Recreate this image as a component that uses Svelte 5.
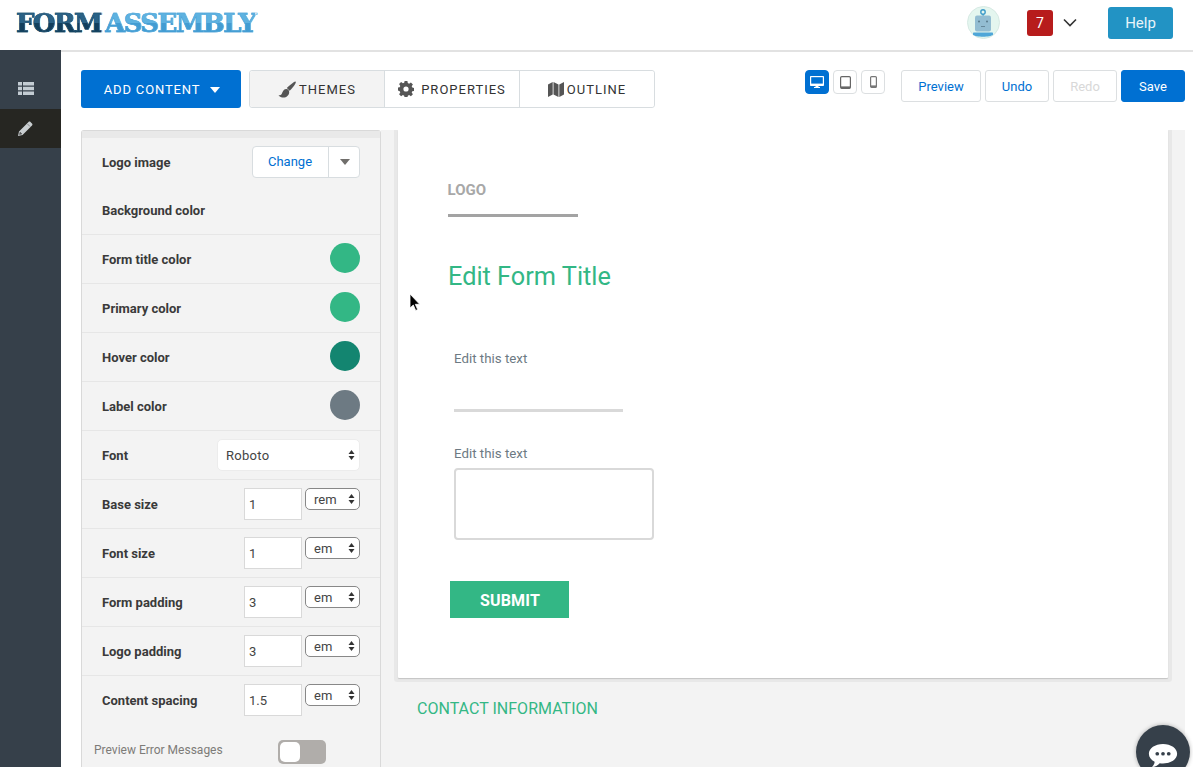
<script lang="ts">
  const colorRows = [
    { label: 'Form title color', color: '#33b785' },
    { label: 'Primary color', color: '#33b785' },
    { label: 'Hover color', color: '#138570' },
    { label: 'Label color', color: '#6d7a83' }
  ];
  const sizeRows = [
    { label: 'Base size', value: '1', unit: 'rem' },
    { label: 'Font size', value: '1', unit: 'em' },
    { label: 'Form padding', value: '3', unit: 'em' },
    { label: 'Logo padding', value: '3', unit: 'em' },
    { label: 'Content spacing', value: '1.5', unit: 'em' }
  ];
</script>

{#snippet updown()}
  <svg class="updown" width="7" height="12" viewBox="0 0 7 12" aria-hidden="true">
    <path d="M3.5 1L6.5 5H.5zM3.5 11L.5 7h6z" fill="#333" />
  </svg>
{/snippet}

<div class="page">
  <header class="topbar">
    <div class="logo"><span class="form">FORM</span><span class="assembly">ASSEMBLY</span></div>
    <div class="top-right">
      <svg class="avatar" width="33" height="33" viewBox="0 0 33 33" aria-hidden="true">
        <circle cx="16.500" cy="16.500" r="16" fill="#e4f6ef" stroke="#d6e9e3" />
        <circle cx="16" cy="6" r="2.200" fill="none" stroke="#3d9bc9" stroke-width="1.400" />
        <rect x="15.500" y="8" width="1.200" height="2" fill="#3d9bc9" />
        <rect x="8" y="9.500" width="16" height="16" rx="2" fill="#93bdd2" />
        <circle cx="12" cy="15.500" r="1" fill="#5a7a8b" />
        <circle cx="20" cy="15.500" r="1" fill="#5a7a8b" />
        <path d="M14 20.500h4" stroke="#5a7a8b" stroke-width=".8" />
        <path d="M7 26.500h18c.6 0 1 .4 1 1v1.300c-2.500 2.600-17.500 2.600-20 0v-1.300c0-.6.400-1 1-1z" fill="#4ea6d8" />
      </svg>
      <div class="badge">7</div>
      <svg class="chev" width="14" height="9" viewBox="0 0 14 9" aria-hidden="true">
        <path d="M1 1.500l6 6 6-6" fill="none" stroke="#333" stroke-width="1.600" />
      </svg>
      <button class="help">Help</button>
    </div>
  </header>

  <div class="body">
    <nav class="rail">
      <div class="rail-item">
        <svg width="16" height="13" viewBox="0 0 16 13" aria-hidden="true">
          <path d="M0 0h4v3.500H0zM5 0h11v3.500H5zM0 4.700h4v3.600H0zM5 4.700h11v3.600H5zM0 9.500h4V13H0zM5 9.500h11V13H5z" fill="#c3ccd3" />
        </svg>
      </div>
      <div class="rail-item active">
        <svg width="15" height="15" viewBox="0 0 15 15" aria-hidden="true">
          <path d="M0 15l1-4.500L10.500 1c.6-.6 1.400-.6 2 0l1.500 1.500c.6.600.6 1.400 0 2L4.500 14z" fill="#c9ced1" />
          <path d="M1.500 13.500l.6-2.400 1.800 1.800zM9.500 3l2.500 2.500" fill="#555" stroke="#555" stroke-width=".6" />
        </svg>
      </div>
    </nav>

    <main class="main">
      <div class="toolbar">
        <button class="add">ADD CONTENT <span class="caret"></span></button>
        <div class="tabs">
          <button class="tab themes">
            <svg width="18" height="17" viewBox="0 0 18 17" aria-hidden="true">
              <path d="M17.500 .5c.5.5.4 1.200-.2 2.200-1.500 2.500-3.700 5.200-5.600 7l-2.900-2.700C10.700 5 13.500 2.800 16 1c.6-.4 1.100-.8 1.500-.5zM8 8c2-.2 3.300 1.200 3.200 3.200-.2 3.200-2.700 5.300-5.700 5.300-2 0-4-.8-5-2.300 1.300.2 2.700-.3 3.300-1.500C4.600 10.800 5.500 8.300 8 8z" fill="#555" />
            </svg>
            THEMES
          </button>
          <button class="tab props">
            <svg width="16" height="16" viewBox="0 0 16 16" aria-hidden="true">
              <path fill-rule="evenodd" d="M6.600 0h2.800l.4 2.100 1.300.6 1.800-1.200 2 2-1.200 1.800.6 1.300 2.100.4v2.800l-2.100.4-.6 1.300 1.200 1.800-2 2-1.800-1.200-1.300.6-.4 2.100H6.600l-.4-2.100-1.300-.6-1.800 1.200-2-2 1.200-1.800-.6-1.300L-.4 9.400V6.600l2.100-.4.600-1.300L1.100 3.100l2-2 1.800 1.200 1.300-.6zM8 5.400a2.600 2.600 0 1 0 0 5.200 2.600 2.600 0 0 0 0-5.200z" fill="#555" />
            </svg>
            PROPERTIES
          </button>
          <button class="tab outline">
            <svg width="16" height="15" viewBox="0 0 16 15" aria-hidden="true">
              <path d="M0 2.500L4.700 0v12.500L0 15zM5.500 0l5 2.500V15l-5-2.500zM11.300 2.500L16 0v12.500L11.300 15z" fill="#555" />
            </svg>
            OUTLINE
          </button>
        </div>
        <div class="tools">
          <div class="devices">
            <button class="device on" aria-label="Desktop">
              <svg width="14" height="12" viewBox="0 0 14 12" aria-hidden="true">
                <path d="M0 1c0-.6.4-1 1-1h12c.6 0 1 .4 1 1v8c0 .6-.4 1-1 1H8.500v1H10v1H4v-1h1.500v-1H1c-.6 0-1-.4-1-1z" fill="#fff" />
                <rect x="1.200" y="1.200" width="11.600" height="6.400" fill="#0070d2" />
              </svg>
            </button>
            <button class="device" aria-label="Tablet">
              <svg width="11" height="13" viewBox="0 0 11 13" aria-hidden="true">
                <rect x=".6" y=".6" width="9.800" height="11.800" rx="1.200" fill="none" stroke="#666" stroke-width="1.200" />
                <rect x="1" y="10.400" width="9" height="2" fill="#666" />
              </svg>
            </button>
            <button class="device" aria-label="Phone">
              <svg width="7" height="12" viewBox="0 0 7 12" aria-hidden="true">
                <rect x=".6" y=".6" width="5.800" height="10.800" rx="1" fill="none" stroke="#777" stroke-width="1.200" />
                <rect x="1" y="9.400" width="5" height="2" fill="#777" />
              </svg>
            </button>
          </div>
          <button class="act preview">Preview</button>
          <button class="act undo">Undo</button>
          <button class="act redo" disabled>Redo</button>
          <button class="act save">Save</button>
        </div>
      </div>

      <div class="workspace">
        <aside class="panel">
          <div class="row first">
            <span class="lbl">Logo image</span>
            <div class="change">
              <span class="change-main">Change</span>
              <span class="change-drop"><span class="drop-caret"></span></span>
            </div>
          </div>
          <div class="row second"><span class="lbl">Background color</span></div>
          {#each colorRows as row}
            <div class="row">
              <span class="lbl">{row.label}</span>
              <span class="swatch" style:background={row.color}></span>
            </div>
          {/each}
          <div class="row">
            <span class="lbl">Font</span>
            <div class="font-select">Roboto {@render updown()}</div>
          </div>
          {#each sizeRows as row}
            <div class="row">
              <span class="lbl">{row.label}</span>
              <div class="size">
                <span class="num">{row.value}</span>
                <span class="unit">{row.unit} {@render updown()}</span>
              </div>
            </div>
          {/each}
          <div class="error-row">
            <span class="error-text">Preview Error Messages</span>
            <span class="toggle"><span class="knob"></span></span>
          </div>
        </aside>

        <section class="canvas">
          <div class="card">
            <div class="logo-slot">LOGO</div>
            <h1>Edit Form Title</h1>
            <div class="field">
              <div class="flabel">Edit this text</div>
              <div class="line"></div>
            </div>
            <div class="field second-field">
              <div class="flabel">Edit this text</div>
              <div class="area"></div>
            </div>
            <button class="submit">SUBMIT</button>
          </div>
          <div class="contact">CONTACT INFORMATION</div>
        </section>
      </div>
    </main>
  </div>

  <svg class="cursor" width="12" height="19" viewBox="0 0 12 19" aria-hidden="true">
    <path d="M1 1v14l3.300-3 2.400 5.500 2-.9-2.400-5.300h4.400z" fill="#000" stroke="#fff" stroke-width=".8" />
  </svg>

  <div class="chat">
    <svg width="30" height="25" viewBox="0 0 34 28" aria-hidden="true">
      <path d="M17 1c9 0 16 4.800 16 11s-7 11-16 11c-1.300 0-2.500-.1-3.700-.3C11 25 8 27 4.500 27c1.500-1.500 3-3.800 3-6C3.500 19 1 15.800 1 12 1 5.800 8 1 17 1z" fill="#fff" />
      <circle cx="10.500" cy="12" r="2.100" fill="#36404a" />
      <circle cx="17" cy="12" r="2.100" fill="#36404a" />
      <circle cx="23.500" cy="12" r="2.100" fill="#36404a" />
    </svg>
  </div>
</div>

<style>
  :global(body) {
    margin: 0;
    background: #fff;
    font-family: Roboto, 'Liberation Sans', sans-serif;
  }
  button {
    font-family: inherit;
    cursor: pointer;
  }
  .page {
    position: relative;
    width: 1193px;
    height: 767px;
    overflow: hidden;
  }

  /* top bar */
  .topbar {
    height: 50px;
    box-sizing: border-box;
    display: flex;
    align-items: center;
    justify-content: space-between;
    padding: 0 20px 0 15px;
    background: #fff;
  }
  .logo {
    font-family: 'DejaVu Serif', serif;
    font-weight: 700;
    font-size: 26px;
    line-height: 30px;
    letter-spacing: -1.6px;
    margin-top: -5px;
    margin-left: 1px;
  }
  .form {
    background: linear-gradient(#2a6286 50%, #123f5c 50%);
    -webkit-background-clip: text;
    background-clip: text;
    color: transparent;
    -webkit-text-stroke: 0.6px #1c4f70;
  }
  .assembly {
    margin-left: 4px;
    background: linear-gradient(#5eb2e0 50%, #429cd2 50%);
    -webkit-background-clip: text;
    background-clip: text;
    color: transparent;
    -webkit-text-stroke: 0.6px #4ea6da;
  }
  .top-right {
    display: flex;
    align-items: center;
    margin-top: -5px;
  }
  .avatar {
    margin-right: 27px;
  }
  .badge {
    width: 26px;
    height: 26px;
    border-radius: 3px;
    background: #b71c1c;
    color: #fff;
    font-size: 14px;
    line-height: 26px;
    text-align: center;
  }
  .chev {
    margin: 0 31px 0 10px;
  }
  .help {
    width: 65px;
    height: 32px;
    border: 0;
    border-radius: 3px;
    background: #2293c4;
    color: #e8f4fa;
    font-size: 15px;
  }

  /* shell */
  .body {
    display: flex;
    height: 717px;
  }
  .rail {
    width: 61px;
    flex: none;
    background: #36404a;
    padding-top: 18px;
    box-sizing: border-box;
  }
  .rail-item {
    height: 41px;
    display: flex;
    align-items: center;
    justify-content: center;
    padding-right: 10px;
  }
  .rail-item.active {
    background: #262622;
    height: 39px;
  }
  .main {
    flex: 1;
    min-width: 0;
    border-top: 2px solid #e2e2e2;
  }

  /* toolbar */
  .toolbar {
    height: 78px;
    box-sizing: border-box;
    display: flex;
    align-items: flex-start;
    padding: 18px 8px 0 20px;
  }
  .add {
    width: 160px;
    height: 38px;
    border: 0;
    border-radius: 3px;
    background: #0070d2;
    color: #fff;
    font-size: 13px;
    letter-spacing: 0.85px;
    padding: 0 0 0 2px;
    display: flex;
    align-items: center;
    justify-content: center;
    gap: 10px;
  }
  .caret {
    width: 0;
    height: 0;
    border: 5px solid transparent;
    border-top: 6px solid #fff;
    border-bottom: 0;
    margin-top: 2px;
  }
  .tabs {
    display: flex;
    margin-left: 8px;
    height: 38px;
    box-sizing: border-box;
    border: 1px solid #d8dde0;
    border-radius: 3px;
  }
  .tab {
    border: 0;
    border-right: 1px solid #d8dde0;
    background: #fff;
    color: #333;
    font-size: 13px;
    letter-spacing: 1px;
    display: flex;
    align-items: center;
    justify-content: center;
    padding: 0;
  }
  .tab svg {
    flex: none;
  }
  .tab:last-child {
    border-right: 0;
    border-radius: 0 3px 3px 0;
  }
  .themes {
    width: 135px;
    background: #f3f3f3;
    gap: 3px;
    border-radius: 3px 0 0 3px;
  }
  .props {
    width: 135px;
    gap: 7px;
  }
  .outline {
    width: 134px;
    gap: 3px;
  }
  .tools {
    margin-left: auto;
    display: flex;
    align-items: flex-start;
  }
  .devices {
    display: flex;
    gap: 4px;
    margin-right: 16px;
  }
  .device {
    width: 24px;
    height: 24px;
    box-sizing: border-box;
    border: 1px solid #dcdfe1;
    border-radius: 4px;
    background: #fff;
    padding: 0;
    display: flex;
    align-items: center;
    justify-content: center;
  }
  .device.on {
    background: #0070d2;
    border-color: #0070d2;
  }
  .act {
    height: 32px;
    box-sizing: border-box;
    border: 1px solid #dcdfe1;
    border-radius: 3px;
    background: #fff;
    color: #0070d2;
    font-size: 13px;
    padding: 0;
    margin-right: 4px;
  }
  .preview {
    width: 80px;
  }
  .undo {
    width: 64px;
  }
  .redo {
    width: 64px;
    color: #d8d8d8;
    cursor: default;
  }
  .save {
    width: 64px;
    margin-right: 0;
    background: #0070d2;
    border-color: #0070d2;
    color: #fff;
  }

  /* workspace */
  .workspace {
    display: flex;
    align-items: flex-start;
    padding-left: 20px;
  }
  .panel {
    width: 300px;
    height: 637px;
    flex: none;
    box-sizing: border-box;
    background: #f3f3f3;
    border: 1px solid #d9d9d9;
    border-bottom: 0;
    border-radius: 3px 3px 0 0;
  }
  .row {
    height: 49px;
    box-sizing: border-box;
    display: flex;
    align-items: center;
    justify-content: space-between;
    padding: 0 20px;
    border-bottom: 1px solid #e6e6e6;
  }
  .row.first {
    height: 56px;
    border-bottom: 0;
    border-top: 7px solid #e9e9e9;
  }
  .row.second {
    height: 48px;
  }
  .row:nth-last-child(2) {
    border-bottom-color: transparent;
  }
  .lbl {
    font-size: 13px;
    font-weight: 700;
    color: #3a3a3a;
  }
  .change {
    display: flex;
    height: 32px;
    box-sizing: border-box;
    border: 1px solid #d8dde0;
    border-radius: 4px;
    background: #fff;
    margin-top: -2px;
  }
  .change-main {
    width: 74px;
    padding-right: 1px;
    text-align: center;
    font-size: 13px;
    line-height: 30px;
    color: #0070d2;
    border-right: 1px solid #d8dde0;
  }
  .change-drop {
    width: 30px;
    padding-left: 1px;
    box-sizing: border-box;
    display: flex;
    align-items: center;
    justify-content: center;
  }
  .drop-caret {
    width: 0;
    height: 0;
    border: 5px solid transparent;
    border-top: 6px solid #706e6b;
    border-bottom: 0;
  }
  .swatch {
    width: 30px;
    height: 30px;
    border-radius: 50%;
    margin-top: -2px;
  }
  .font-select {
    width: 143px;
    height: 32px;
    box-sizing: border-box;
    background: #fff;
    border-radius: 5px;
    border: 1px solid #ececec;
    padding: 0 4px 0 8px;
    font-size: 13px;
    color: #444;
    letter-spacing: 0.3px;
    display: flex;
    align-items: center;
    justify-content: space-between;
  }
  .size {
    display: flex;
    align-items: flex-start;
    gap: 3px;
  }
  .num {
    width: 58px;
    height: 32px;
    box-sizing: border-box;
    background: #fff;
    border: 1px solid #d9d9d9;
    padding-left: 4px;
    font-size: 13px;
    line-height: 32px;
    color: #444;
  }
  .unit {
    width: 55px;
    height: 22px;
    box-sizing: border-box;
    background: #fff;
    border: 1px solid #888;
    border-radius: 5px;
    padding: 0 4px 0 8px;
    font-size: 13px;
    color: #444;
    display: flex;
    align-items: center;
    justify-content: space-between;
  }
  .error-row {
    display: flex;
    align-items: center;
    padding: 0 0 0 12px;
    height: 24px;
    margin-top: 15px;
    font-size: 12px;
    color: #7d7b78;
  }
  .error-text {
    margin-bottom: 4px;
  }
  .toggle {
    position: relative;
    width: 48px;
    height: 24px;
    margin-left: 55px;
    border-radius: 5px;
    background: #b0adaa;
  }
  .knob {
    position: absolute;
    left: 2px;
    top: 2px;
    width: 20px;
    height: 20px;
    border-radius: 5px;
    background: #fff;
  }

  /* form canvas */
  .canvas {
    width: 804px;
    height: 637px;
    flex: none;
    background: #f3f3f3;
    padding-left: 17px;
    box-sizing: border-box;
    overflow: hidden;
  }
  .card {
    width: 770px;
    height: 548px;
    box-sizing: border-box;
    background: #fff;
    border-radius: 0 0 1px 1px;
    box-shadow:
      0 1px 1px #c4c4c4,
      0 0 0 4px #e8e8e8;
    padding: 50px 0 0 50px;
  }
  .logo-slot {
    width: 130px;
    height: 37px;
    box-sizing: border-box;
    border-bottom: 3px solid #a3a3a3;
    color: #a8a8a8;
    font-size: 15px;
    font-weight: 700;
    line-height: 20px;
    margin-left: -0.5px;
  }
  h1 {
    margin: 45px 0 0 0;
    font-size: 25.300px;
    font-weight: 400;
    line-height: 30px;
    color: #33b785;
  }
  .field {
    margin: 59px 0 0 6px;
    width: 200px;
  }
  .second-field {
    margin-top: 34px;
  }
  .flabel {
    font-size: 13.300px;
    line-height: 16px;
    color: #6d7a83;
  }
  .line {
    width: 169px;
    height: 3px;
    margin-top: 42px;
    background: #d9d9d9;
  }
  .area {
    width: 200px;
    height: 72px;
    box-sizing: border-box;
    margin-top: 6px;
    border: 2px solid #d9d9d9;
    border-radius: 4px;
  }
  .submit {
    display: block;
    width: 119px;
    height: 37px;
    margin: 41px 0 0 2px;
    border: 0;
    background: #33b785;
    color: #fff;
    font-size: 16px;
    font-weight: 700;
    padding: 2px 0 0 1px;
    letter-spacing: 0.2px;
  }
  .contact {
    margin: 21px 0 0 19px;
    font-size: 16px;
    line-height: 20px;
    letter-spacing: 0.02px;
    color: #33b785;
  }

  /* overlays */
  .cursor {
    position: absolute;
    left: 409px;
    top: 293px;
  }
  .chat {
    position: absolute;
    left: 1136px;
    top: 725px;
    width: 54px;
    height: 54px;
    border-radius: 50%;
    background: #36404a;
    box-shadow: 0 0 4px rgba(0, 0, 0, 0.3);
    display: flex;
    justify-content: center;
    padding-top: 18px;
    box-sizing: border-box;
  }
</style>
